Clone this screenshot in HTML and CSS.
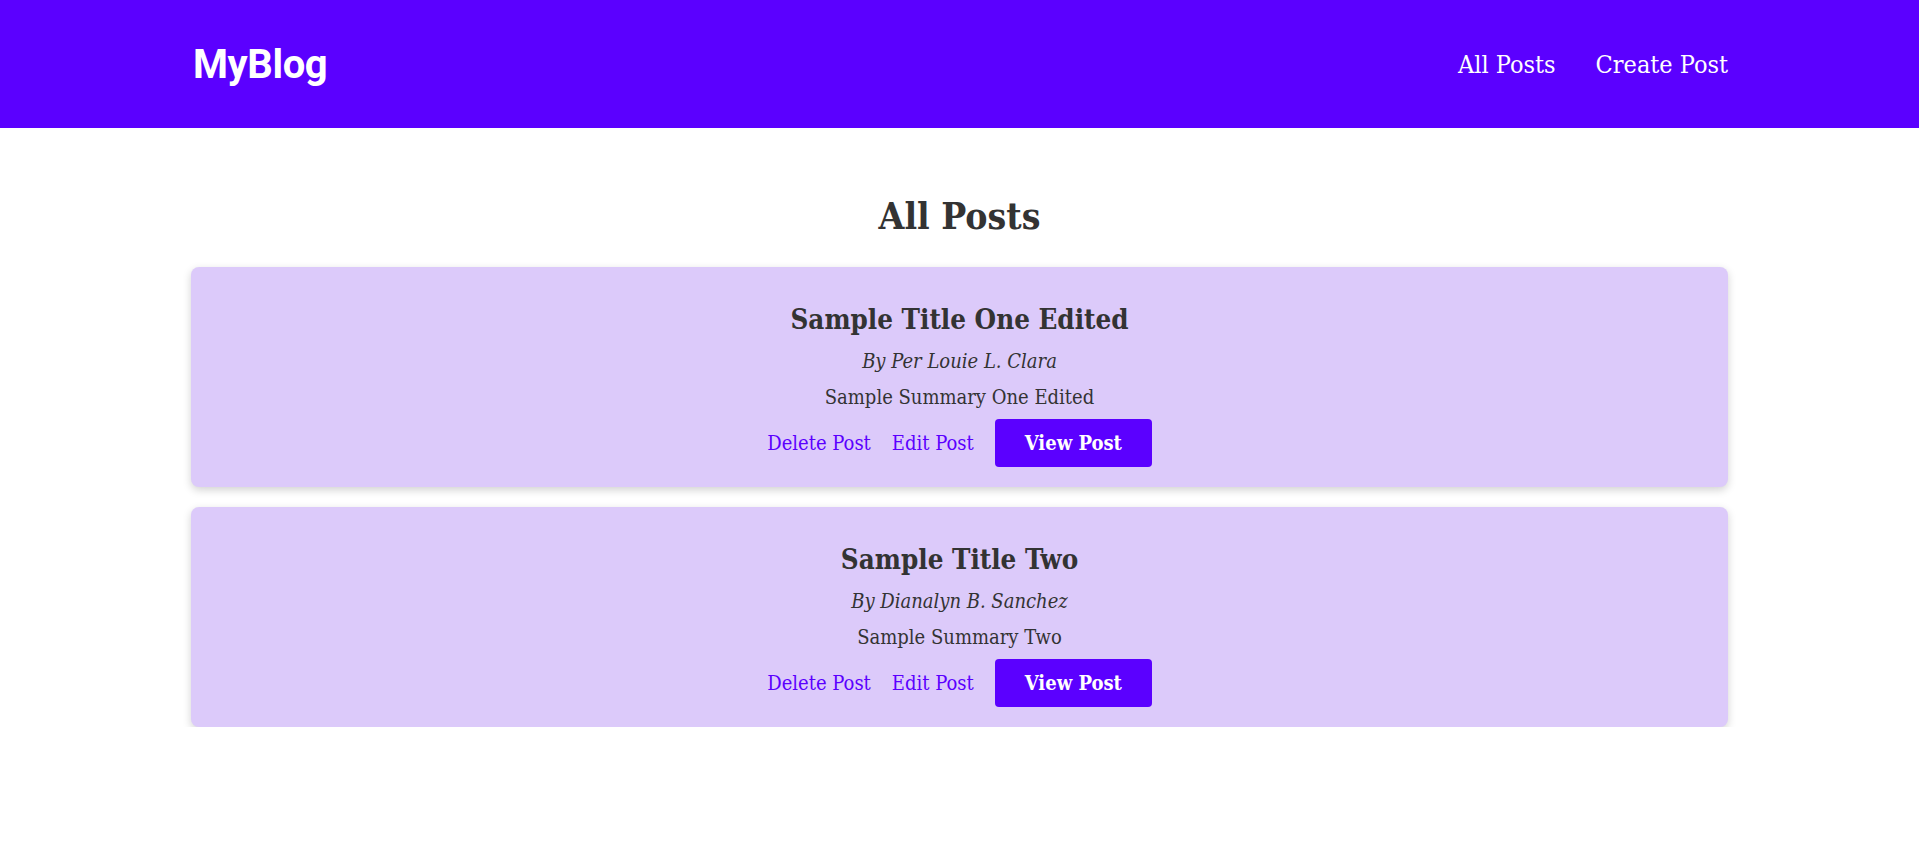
FILE: index.html
```html
<!DOCTYPE html>
<html lang="en">
<head>
<meta charset="utf-8">
<title>MyBlog</title>
<link rel="stylesheet" href="styles.css">
</head>
<body>
<header class="topbar">
  <div class="topbar-inner">
    <a class="brand" href="#">MyBlog</a>
    <nav class="nav">
      <a href="#">All Posts</a>
      <a href="#">Create Post</a>
    </nav>
  </div>
</header>
<main class="content">
  <h1 class="page-title">All Posts</h1>
  <article class="post-card">
    <h2 class="post-title">Sample Title One Edited</h2>
    <p class="post-author">By Per Louie L. Clara</p>
    <p class="post-summary">Sample Summary One Edited</p>
    <div class="post-actions">
      <a class="link" href="#">Delete Post</a>
      <a class="link" href="#">Edit Post</a>
      <a class="btn" href="#">View Post</a>
    </div>
  </article>
  <article class="post-card">
    <h2 class="post-title">Sample Title Two</h2>
    <p class="post-author">By Dianalyn B. Sanchez</p>
    <p class="post-summary">Sample Summary Two</p>
    <div class="post-actions">
      <a class="link" href="#">Delete Post</a>
      <a class="link" href="#">Edit Post</a>
      <a class="btn" href="#">View Post</a>
    </div>
  </article>
</main>
</body>
</html>
```
FILE: styles.css
```css
* { box-sizing: border-box; }
body {
  margin: 0;
  font-family: "DejaVu Serif Condensed", "DejaVu Serif", serif;
  font-stretch: condensed;
  color: #333333;
  background: #ffffff;
}
a { text-decoration: none; }
.topbar {
  background: #5b00ff;
  height: 128px;
}
.topbar-inner {
  width: 1537px;
  margin: 0 auto;
  height: 100%;
  display: flex;
  align-items: center;
  justify-content: space-between;
  padding-left: 2px;
}
.brand {
  font-family: Roboto, sans-serif;
  font-stretch: normal;
  font-weight: 700;
  font-size: 40px;
  color: #ffffff;
  letter-spacing: -0.4px;
}
.nav { display: flex; gap: 40px; }
.nav a { color: #ffffff; font-size: 25px; }
.content {
  width: 1537px;
  margin: 0 auto;
  padding-top: 64px;
  display: flex;
  flex-direction: column;
  gap: 20px;
}
.page-title {
  margin: 0 0 7px;
  text-align: center;
  font-size: 37px;
  font-weight: 700;
  line-height: 48px;
}
.post-card {
  background: #dccafa;
  border-radius: 8px;
  box-shadow: 0 3px 8px rgba(0,0,0,0.18);
  padding: 34px 20px 20px;
  display: flex;
  flex-direction: column;
  align-items: center;
}
.post-title { margin: 0 0 10px; font-size: 27.5px; font-weight: 700; line-height: 36px; }
.post-author { margin: 0 0 8px; font-size: 20px; font-style: italic; line-height: 28px; }
.post-summary { margin: 0 0 8px; font-size: 20px; line-height: 28px; }
.post-actions { display: flex; align-items: center; gap: 21px; }
.link { color: #5b00ff; font-size: 20px; }
.btn {
  background: #5b00ff;
  color: #ffffff;
  font-size: 20px;
  font-weight: 700;
  border-radius: 4px;
  width: 157px;
  height: 48px;
  display: flex;
  align-items: center;
  justify-content: center;
}
```
